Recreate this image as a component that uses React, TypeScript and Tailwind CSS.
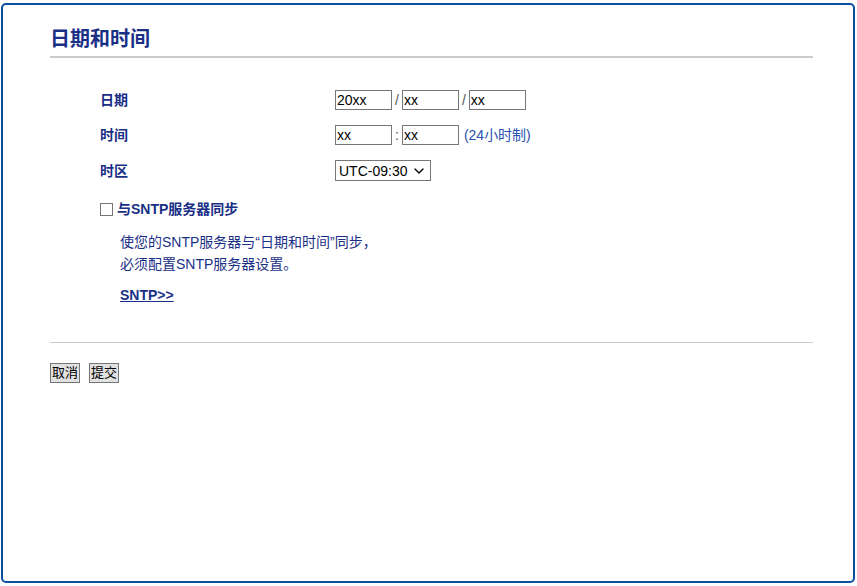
import { ChevronDown } from "lucide-react";

const font = "font-['Liberation_Sans','Noto_Sans_CJK_SC',sans-serif]";

function Field({ value }: { value: string }) {
  return (
    <input
      defaultValue={value}
      className="h-[20px] w-[57px] border border-[#767676] bg-white px-[1px] text-[14px] text-black outline-none"
    />
  );
}

export default function App() {
  return (
    <div className={`${font} bg-white pl-[1px] pt-[3px]`}>
      <div className="h-[580px] w-[854px] rounded-[5px] border-2 border-[#0b4fa0] pl-[47px] pr-[40px] pt-[22px]">
        <h1 className="border-b-2 border-[#cccccc] pb-[5px] text-[20px] font-bold leading-[24px] text-[#1a2f86]">
          日期和时间
        </h1>

        <div className="mt-[32px] grid grid-cols-[235px_1fr] gap-y-[15px] pl-[50px] text-[14px] leading-[20px] text-[#1a2f86]">
          <span className="self-center font-bold">日期</span>
          <div className="flex items-center">
            <Field value="20xx" />
            <span className="mx-[3px] text-[#555]">/</span>
            <Field value="xx" />
            <span className="mx-[3px] text-[#555]">/</span>
            <Field value="xx" />
          </div>

          <span className="self-center font-bold">时间</span>
          <div className="flex items-center">
            <Field value="xx" />
            <span className="mx-[3px] text-[#555]">:</span>
            <Field value="xx" />
            <span className="ml-[5px] text-[#2a4fb0]">(24小时制)</span>
          </div>

          <span className="self-center font-bold">时区</span>
          <div className="flex items-center">
            <div className="flex h-[21px] w-[96px] items-center justify-between border border-[#767676] bg-white pl-[3px] pr-[3px] text-[14px] text-black">
              <span>UTC-09:30</span>
              <ChevronDown size={16} strokeWidth={2} />
            </div>
          </div>
        </div>

        <label className="mt-[18px] flex items-center pl-[50px] text-[14px] font-bold text-[#1a2f86]">
          <span className="h-[13px] w-[13px] border border-[#767676] bg-white" />
          <span className="ml-[4px]">与SNTP服务器同步</span>
        </label>

        <div className="mt-[11px] pl-[70px] text-[14px] leading-[22px] text-[#1a2f86]">
          <p>使您的SNTP服务器与“日期和时间”同步，</p>
          <p>必须配置SNTP服务器设置。</p>
          <a className="mt-[9px] inline-block font-bold underline" href="#">
            SNTP&gt;&gt;
          </a>
        </div>

        <div className="mt-[36px] border-t border-[#cccccc]" />

        <div className="mt-[20px] flex gap-[9px]">
          <button className="h-[20px] border border-[#767676] bg-[#e1e1e1] px-[1px] text-[13px] leading-[18px] text-black">
            取消
          </button>
          <button className="h-[20px] border border-[#767676] bg-[#e1e1e1] px-[1px] text-[13px] leading-[18px] text-black">
            提交
          </button>
        </div>
      </div>
    </div>
  );
}
